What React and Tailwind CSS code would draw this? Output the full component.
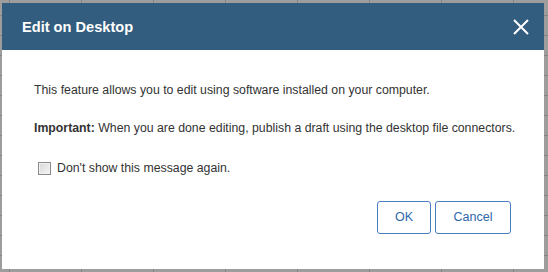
export default function App() {
  return (
    <div
      className="w-[548px] h-[272px] overflow-hidden bg-[#9d9d9d] bg-[linear-gradient(to_right,#858585_1px,transparent_1px),linear-gradient(to_bottom,#858585_1px,transparent_1px)] bg-[size:72px_20px] bg-[position:9px_15px] pl-[2px] pt-[3px]"
      style={{ fontFamily: '"Liberation Sans", Arial, sans-serif' }}
    >
      <div className="w-[542px] h-[266px] bg-white flex flex-col">
        <div className="h-[47px] bg-[#335d7e] flex items-center justify-between pl-[20px] pr-[15px]">
          <span className="text-white font-bold text-[14.6px] leading-[18px]">Edit on Desktop</span>
          <svg width="16" height="16" viewBox="0 0 16 16" className="block">
            <path d="M1 1 L15 15 M15 1 L1 15" stroke="#ffffff" strokeWidth="2" fill="none" />
          </svg>
        </div>
        <div className="pt-[33px] pl-[32px] pr-[20px] text-[12.3px] leading-[15px] text-[#333333] whitespace-nowrap">
          <p className="h-[15px]">This feature allows you to edit using software installed on your computer.</p>
          <p className="mt-[23px] h-[15px]">
            <span className="font-bold">Important:</span> When you are done editing, publish a draft using the desktop file connectors.
          </p>
          <div className="mt-[25px] h-[15px] flex items-center">
            <div className="ml-[4px] w-[13px] h-[13px] border border-[#8a8a8a] bg-[linear-gradient(to_bottom_right,#d8d8d8,#f4f4f4)] shadow-[inset_0_0_0_1px_#f0f0f0]" />
            <span className="ml-[6px]">Don't show this message again.</span>
          </div>
          <div className="mt-[25px] pr-[13px] flex justify-end gap-[4px]">
            <button className="w-[54px] h-[33px] border border-[#4a7dbd] rounded-[3px] text-[#2c67aa] text-[12.5px] bg-white">OK</button>
            <button className="w-[76px] h-[33px] border border-[#4a7dbd] rounded-[3px] text-[#2c67aa] text-[12.5px] bg-white">Cancel</button>
          </div>
        </div>
      </div>
    </div>
  );
}
